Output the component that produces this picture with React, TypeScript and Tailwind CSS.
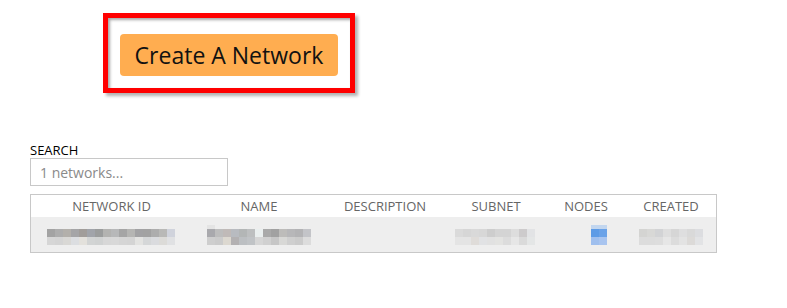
const idTop = ["#a3a3a3", "#adadad", "#b3b0ab", "#a5a5a7", "#a19d9a", "#a1a4aa", "#9b9d9d", "#b3b3b1", "#b7b8b9", "#a5a5a5", "#b5b5b3", "#a2a2a4", "#a2a2a2", "#adadad", "#b9b9b7", "#d0d3dc"];
const idBot = ["#d6d6d6", "#d4d4d4", "#d9d8d5", "#dcdee1", "#e3e1dc", "#d2d4d4", "#d0d2d2", "#d7d7d7", "#d8d8d8", "#d5d5d5", "#d4d4d4", "#e3e3e1", "#d5d7d8", "#dadbde", "#dcdbd8", "#e0e1e3"];
const nameTop = ["#a9a9ad", "#bdbdbd", "#c0bab8", "#b8bbc0", "#b3b6b6", "#bdbfc0", "#eaefef", "#a9a9a9", "#a1a1a1", "#bdbcba", "#b7b7b9", "#b3b3b5", "#c3c4c8"];
const nameBot = ["#cecece", "#cbcbcb", "#dcd8d0", "#b3b1b2", "#bcbfc2", "#c0c3c6", "#d6d6d6", "#d0d0d0", "#c6c6c6", "#d8d8d6", "#cfcfcf", "#cbcbcb", "#dcdcdc"];
const subTop = ["#dadada", "#d6d6d6", "#d9d9d9", "#d7d7d7", "#cdcdcd", "#d4d4d4", "#d4d4d4", "#dddddd", "#cdcbcc", "#e2e3e5"];
const subBot = ["#e4e4e4", "#e4e4e4", "#dfdcd9", "#e1e2e4", "#e1e1e1", "#e3e3e1", "#dcdcdc", "#e6e6e6", "#dadada", "#e4e6e6"];
const crTop = ["#d4d4d2", "#d8d8d6", "#d2d3d5", "#dedede", "#d6d6d6", "#dededf", "#d9d9d9", "#dcdde0"];
const crBot = ["#dcdcdc", "#dcdcdc", "#dddddd", "#e6e6e6", "#dcdcdc", "#e3e3e3", "#dcdad8", "#e2e3e5"];

function Mosaic({ rows }: { rows: string[][] }) {
  return (
    <div className="flex flex-col">
      {rows.map((r, i) => (
        <div key={i} className="flex">
          {r.map((c, j) => (
            <div key={j} className="h-2 w-2" style={{ backgroundColor: c }} />
          ))}
        </div>
      ))}
    </div>
  );
}

export default function App() {
  return (
    <div className="h-[308px] w-[787px] bg-white font-['Open_Sans',sans-serif] text-black">
      <div className="pl-[103px] pt-[13px]">
        <div className="inline-block border-[5px] border-[#ff0000] bg-white pb-3 pl-3 pr-3 pt-4 shadow-[inset_2px_2px_3px_rgba(0,0,0,0.35),3px_3px_3px_rgba(0,0,0,0.3)]">
          <button className="flex h-[42px] w-[218px] items-center justify-center rounded-[4px] bg-[#ffad50] text-[23px] leading-none text-[#111]">
            Create A Network
          </button>
        </div>
      </div>

      <div className="px-[30px] pt-[50px]">
        <div className="text-[13px] leading-[15px] text-black">SEARCH</div>
        <div className="flex h-[28px] w-[198px] items-center border border-[#c8c8c8] px-[9px] text-[14px] text-[#8a8a8a]">
          1 networks...
        </div>

        <div className="mt-[8px] w-[687px] border border-[#c8c8c8]">
          <div className="grid h-[22px] grid-cols-[161px_134px_118px_104px_76px_94px] items-center text-center text-[13px] leading-none text-[#666]">
            <div>NETWORK ID</div>
            <div>NAME</div>
            <div>DESCRIPTION</div>
            <div>SUBNET</div>
            <div>NODES</div>
            <div>CREATED</div>
          </div>
          <div className="flex h-[35px] bg-[#eeeeee]">
            <div className="ml-[16px] mt-[12px]">
              <Mosaic rows={[idTop, idBot]} />
            </div>
            <div className="ml-[32px] mt-[8px]">
              <div className="flex h-1">
                <div className="h-1 w-2 bg-[#e4e4e4]" />
              </div>
              <Mosaic rows={[nameTop, nameBot]} />
            </div>
            <div className="ml-[144px] mt-[12px]">
              <Mosaic rows={[subTop, subBot]} />
            </div>
            <div className="ml-[56px] mt-[8px]">
              <div className="h-1 w-4 bg-[#c2d6ef]" />
              <Mosaic rows={[["#5d9be6", "#6aa2e8"], ["#9fbfee", "#a8c4ef"]]} />
            </div>
            <div className="ml-[32px] mt-[12px]">
              <Mosaic rows={[crTop, crBot]} />
            </div>
          </div>
        </div>
      </div>
    </div>
  );
}
